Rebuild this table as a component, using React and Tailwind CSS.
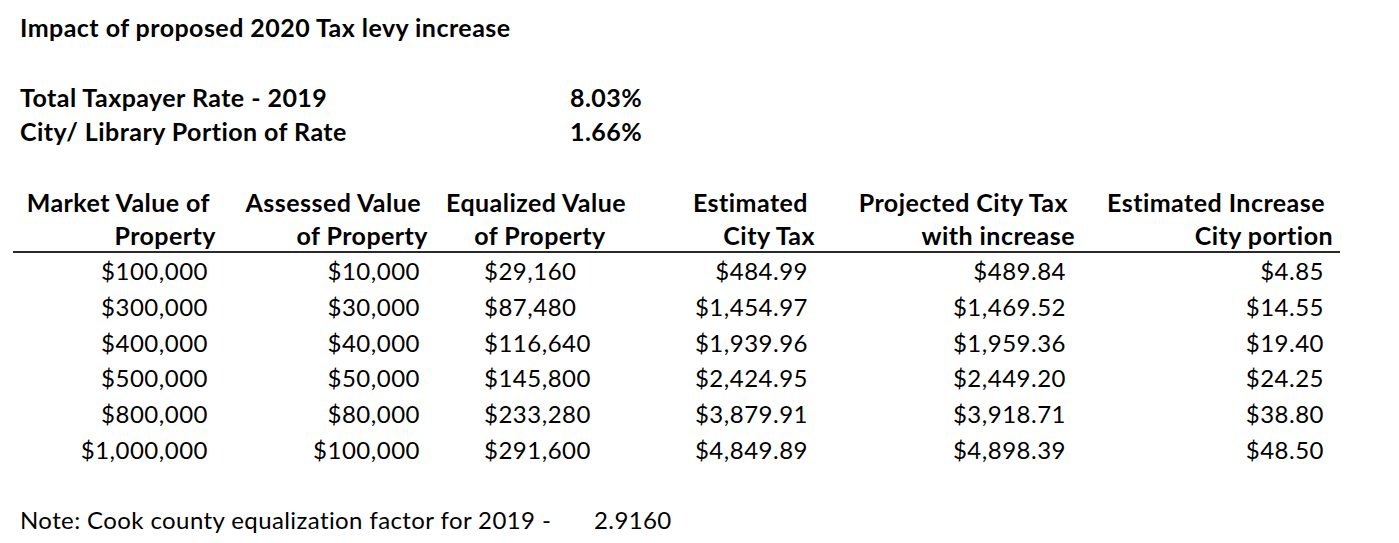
import React from "react";

const rows = [
  ["$100,000", "$10,000", "$29,160", "$484.99", "$489.84", "$4.85"],
  ["$300,000", "$30,000", "$87,480", "$1,454.97", "$1,469.52", "$14.55"],
  ["$400,000", "$40,000", "$116,640", "$1,939.96", "$1,959.36", "$19.40"],
  ["$500,000", "$50,000", "$145,800", "$2,424.95", "$2,449.20", "$24.25"],
  ["$800,000", "$80,000", "$233,280", "$3,879.91", "$3,918.71", "$38.80"],
  ["$1,000,000", "$100,000", "$291,600", "$4,849.89", "$4,898.39", "$48.50"],
];

export default function App() {
  return (
    <div className="w-[1399px] h-[543px] bg-white text-black font-['Lato',sans-serif] text-[24px] pt-[9px] overflow-hidden">
      <div className="pl-[20px] h-[36px] leading-[36px] font-bold text-[25px] tracking-[0.45px]">
        Impact of proposed 2020 Tax levy increase
      </div>

      <div className="mt-[35px] font-bold text-[25px] tracking-[0.45px]">
        <div className="flex h-[34px] leading-[34px]">
          <div className="w-[570px] pl-[20px]">Total Taxpayer Rate - 2019</div>
          <div>8.03%</div>
        </div>
        <div className="flex h-[34px] leading-[34px]">
          <div className="w-[570px] pl-[20px]">City/ Library Portion of Rate</div>
          <div>1.66%</div>
        </div>
      </div>

      <div className="mt-[37px] font-bold text-[25px] tracking-[0.45px]">
        <div className="flex h-[34px] leading-[34px]">
          <div className="w-[210px] text-right">Market Value of</div>
          <div className="w-[211px] text-right">Assessed Value</div>
          <div className="w-[230px] text-center">Equalized Value</div>
          <div className="w-[157px] text-right">Estimated</div>
          <div className="w-[260px] text-right">Projected City Tax</div>
          <div className="w-[257px] text-right">Estimated Increase</div>
        </div>
        <div className="flex h-[32px] leading-[32px]">
          <div className="w-[216px] text-right">Property</div>
          <div className="w-[212px] text-right">of Property</div>
          <div className="w-[224px] text-center">of Property</div>
          <div className="w-[163px] text-right">City Tax</div>
          <div className="w-[260px] text-right">with increase</div>
          <div className="w-[258px] text-right">City portion</div>
        </div>
      </div>

      <div className="ml-[13px] w-[1327px] h-[2px] bg-[#2a2a2a]" />

      <div className="tracking-[0.5px]">
        {rows.map((r, i) => (
          <div key={i} className="flex h-[35.8px] leading-[35.8px]">
            <div className="w-[208px] text-right">{r[0]}</div>
            <div className="w-[212px] text-right">{r[1]}</div>
            <div className="w-[200px] pl-[64px]">{r[2]}</div>
            <div className="w-[188px] text-right">{r[3]}</div>
            <div className="w-[258px] text-right">{r[4]}</div>
            <div className="w-[258px] text-right">{r[5]}</div>
          </div>
        ))}
      </div>

      <div className="mt-[34px] flex h-[36px] leading-[36px] tracking-[0.4px]">
        <div className="w-[594px] pl-[20px]">Note: Cook county equalization factor for 2019 -</div>
        <div>2.9160</div>
      </div>
    </div>
  );
}
